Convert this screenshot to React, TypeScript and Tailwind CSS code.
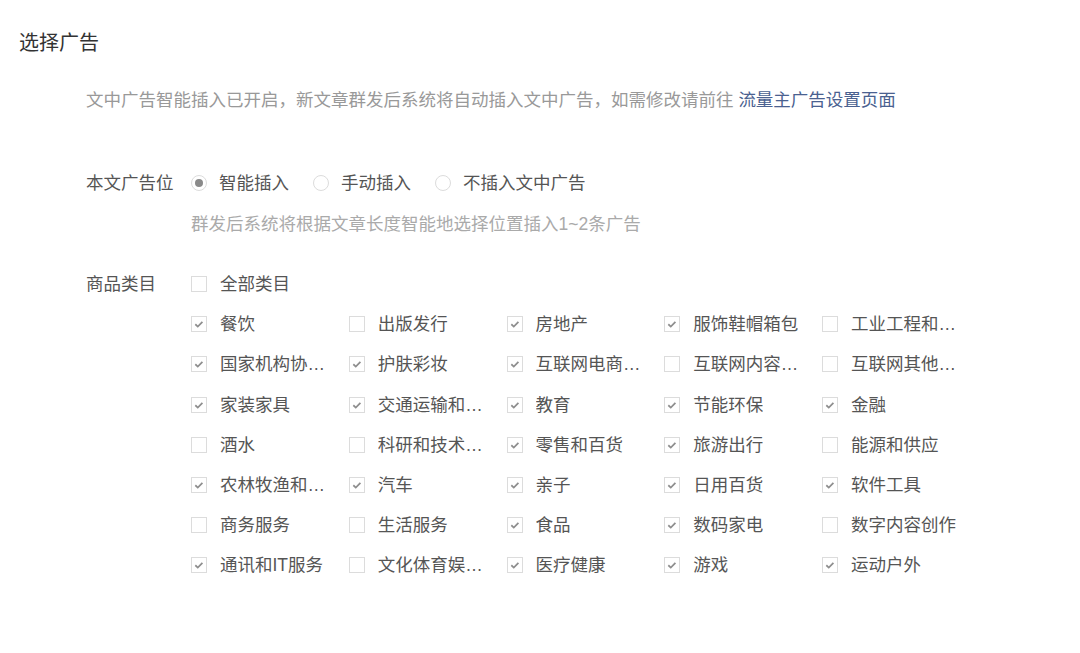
import { useState } from "react";

const font = { fontFamily: '"Liberation Sans", "Noto Sans CJK SC", sans-serif' };

const categories: { name: string; checked: boolean }[] = [
  { name: "餐饮", checked: true },
  { name: "出版发行", checked: false },
  { name: "房地产", checked: true },
  { name: "服饰鞋帽箱包", checked: true },
  { name: "工业工程和制造业", checked: false },
  { name: "国家机构协会组织", checked: true },
  { name: "护肤彩妆", checked: true },
  { name: "互联网电商平台", checked: true },
  { name: "互联网内容平台", checked: false },
  { name: "互联网其他服务", checked: false },
  { name: "家装家具", checked: true },
  { name: "交通运输和物流", checked: true },
  { name: "教育", checked: true },
  { name: "节能环保", checked: true },
  { name: "金融", checked: true },
  { name: "酒水", checked: false },
  { name: "科研和技术服务", checked: false },
  { name: "零售和百货", checked: true },
  { name: "旅游出行", checked: true },
  { name: "能源和供应", checked: false },
  { name: "农林牧渔和畜牧", checked: true },
  { name: "汽车", checked: true },
  { name: "亲子", checked: true },
  { name: "日用百货", checked: true },
  { name: "软件工具", checked: true },
  { name: "商务服务", checked: false },
  { name: "生活服务", checked: false },
  { name: "食品", checked: true },
  { name: "数码家电", checked: true },
  { name: "数字内容创作", checked: false },
  { name: "通讯和IT服务", checked: true },
  { name: "文化体育娱乐活动", checked: false },
  { name: "医疗健康", checked: true },
  { name: "游戏", checked: true },
  { name: "运动户外", checked: true },
];

function Checkbox({ checked }: { checked: boolean }) {
  return (
    <span className="flex h-4 w-4 shrink-0 items-center justify-center border border-[#dcdcdc] bg-white">
      {checked && (
        <svg viewBox="0 0 16 16" className="h-4 w-4" fill="none">
          <path d="M3.8 8.3 6.6 10.9 11.9 5.6" stroke="#8e8e8e" strokeWidth="2" />
        </svg>
      )}
    </span>
  );
}

function Radio({ checked }: { checked: boolean }) {
  return (
    <span className="flex h-4 w-4 shrink-0 items-center justify-center rounded-full border border-[#dcdcdc] bg-white">
      {checked && <span className="h-2 w-2 rounded-full bg-[#8a8a8a]" />}
    </span>
  );
}

export default function App() {
  const [mode, setMode] = useState(0);
  const [items, setItems] = useState(categories);
  const all = items.every((i) => i.checked);

  const modes = ["智能插入", "手动插入", "不插入文中广告"];

  return (
    <div className="min-h-[653px] w-[1080px] bg-white pl-[19px] text-[17.5px] text-[#555]" style={font}>
      <div className="pt-[29px] text-[20px] leading-[28px] text-[#333]">选择广告</div>

      <div className="mt-[31px] pl-[67px] leading-[24px] text-[#999]">
        文中广告智能插入已开启，新文章群发后系统将自动插入文中广告，如需修改请前往{" "}
        <a className="cursor-pointer text-[#4a6190]">流量主广告设置页面</a>
      </div>

      <div className="mt-[59px] flex pl-[67px] leading-[24px]">
        <div className="w-[105px] shrink-0">本文广告位</div>
        <div>
          <div className="flex items-center">
            {modes.map((m, i) => (
              <label
                key={m}
                onClick={() => setMode(i)}
                className="mr-[24px] flex cursor-pointer items-center gap-[12px]"
              >
                <Radio checked={mode === i} />
                <span>{m}</span>
              </label>
            ))}
          </div>
          <div className="mt-[17px] text-[#aaa]">群发后系统将根据文章长度智能地选择位置插入1~2条广告</div>
        </div>
      </div>

      <div className="mt-[28px] flex pl-[67px]">
        <div className="flex h-[40.2px] w-[105px] shrink-0 items-center">商品类目</div>
        <div>
          <label
            className="flex h-[40.2px] cursor-pointer items-center gap-[13px]"
            onClick={() => setItems(items.map((i) => ({ ...i, checked: !all })))}
          >
            <Checkbox checked={all} />
            <span>全部类目</span>
          </label>
          <div className="grid grid-cols-[repeat(5,157.75px)]">
            {items.map((item, idx) => (
              <label
                key={item.name}
                className="flex h-[40.2px] cursor-pointer items-center gap-[13px]"
                onClick={() =>
                  setItems(items.map((i, j) => (j === idx ? { ...i, checked: !i.checked } : i)))
                }
              >
                <Checkbox checked={item.checked} />
                <span className="max-w-[110px] truncate">{item.name}</span>
              </label>
            ))}
          </div>
        </div>
      </div>
    </div>
  );
}
